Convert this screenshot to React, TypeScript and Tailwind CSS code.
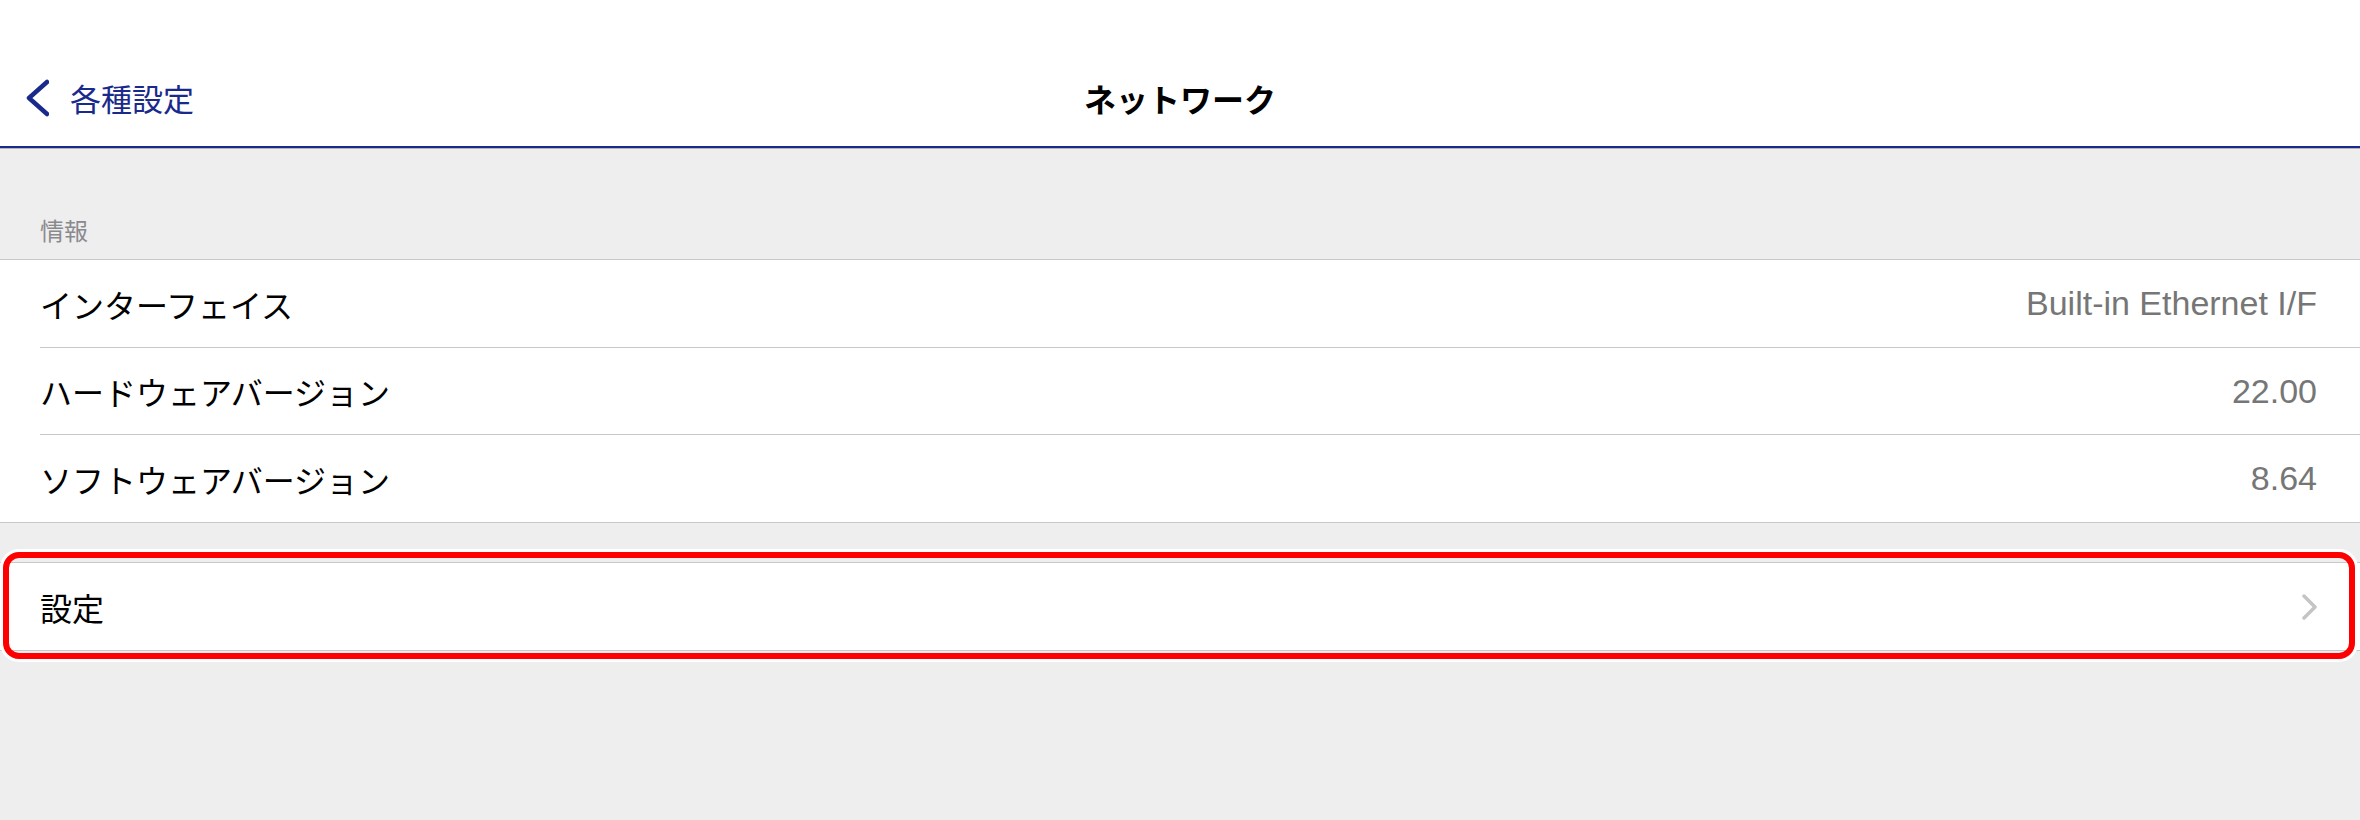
import type { ReactNode } from "react";

const JP = "font-['Noto_Sans_CJK_JP',sans-serif]";

function Row({ label, value, last, chevron, tall }: { label: string; value?: string; last?: boolean; chevron?: boolean; tall?: boolean }) {
  return (
    <div className={`${tall ? "h-[88px]" : "h-[87px]"} pl-[40px] bg-white`}>
      <div className={`h-full flex items-center justify-between pr-[43px] ${last ? "" : "border-b border-[#c8c8cc]"}`}>
        <span className={`${JP} text-[32px] text-black`}>{label}</span>
        {value && (
          <span className="font-['Liberation_Sans',sans-serif] text-[34px] text-[#767676]">{value}</span>
        )}
        {chevron && (
          <svg width="16" height="26" viewBox="0 0 16 26" className="mr-[-1px]">
            <polyline points="2,2 13,13 2,24" fill="none" stroke="#c4c4c8" strokeWidth="3.5" strokeLinecap="round" strokeLinejoin="round" />
          </svg>
        )}
      </div>
    </div>
  );
}

function Group({ children }: { children: ReactNode }) {
  return <div className="relative border-y border-[#c8c8cc] bg-white">{children}</div>;
}

export default function App() {
  return (
    <div className={`w-[2360px] h-[820px] bg-[#eeeeee] overflow-hidden ${JP}`}>
      {/* ナビゲーションバー */}
      <div className="h-[146px] bg-white pt-[50px]">
        <div className="grid grid-cols-[1fr_auto_1fr] items-center h-[96px]">
          <div className="flex items-center pl-[25px] text-[#1a2a8c]">
            <svg width="24" height="40" viewBox="0 0 24 40">
              <polyline points="22,4 4,20 22,36" fill="none" stroke="#1a2a8c" strokeWidth="4.5" strokeLinecap="round" strokeLinejoin="round" />
            </svg>
            <span className="ml-[21px] text-[31px]">各種設定</span>
          </div>
          <div className="text-[32px] font-bold text-black">ネットワーク</div>
          <div />
        </div>
      </div>
      <div className="h-[2px] bg-[#1a2a8c]" />
      <div className="h-px bg-[#b4b4b4]" />

      {/* 情報 */}
      <div className="h-[110px] pt-[57px] pl-[40px]">
        <div className="leading-[48px] text-[24px] text-[#8a8a8e]">情報</div>
      </div>
      <Group>
        <Row label="インターフェイス" value="Built-in Ethernet I/F" tall />
        <Row label="ハードウェアバージョン" value="22.00" />
        <Row label="ソフトウェアバージョン" value="8.64" last />
      </Group>

      {/* 設定 */}
      <div className="mt-[39px]">
        <Group>
          <Row label="設定" chevron last />
          <div className="absolute -top-[11px] left-[3px] right-[5px] -bottom-[9px] border-[6px] border-[#ff0000] rounded-[16px] shadow-[0_0_0_3px_white] pointer-events-none" />
        </Group>
      </div>
    </div>
  );
}
